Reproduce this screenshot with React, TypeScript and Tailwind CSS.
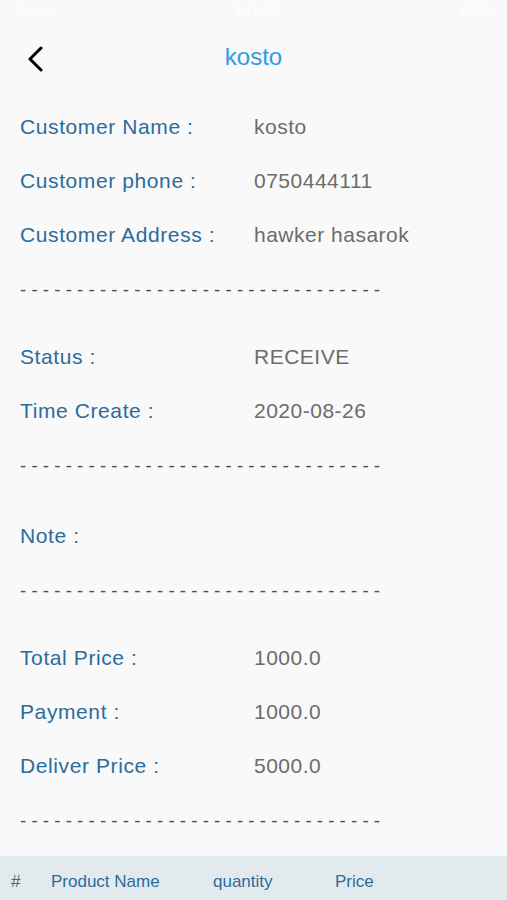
import { ReactNode } from 'react';

const font = { fontFamily: '"Liberation Sans", Arial, sans-serif' };

function Row({ label, value }: { label: string; value?: string }) {
  return (
    <div className="flex h-[54px] items-center pl-[20px]">
      <div className="w-[234px] text-[21px] tracking-[0.6px] text-[#2b6c9c]">
        {label}
      </div>
      <div className="text-[21px] tracking-[0.5px] text-[#6c6c6c]">{value}</div>
    </div>
  );
}

function Divider({ className }: { className: string }) {
  return (
    <div className={className}>
      <div className="pt-[18px] pl-[20px] text-[18.7px] leading-[20px] whitespace-pre text-[#4e4e4e]">
        {'- '.repeat(32)}
      </div>
    </div>
  );
}

function Section({ children }: { children: ReactNode }) {
  return <div className="flex flex-col">{children}</div>;
}

export default function App() {
  return (
    <div className="h-[900px] w-full overflow-hidden bg-[#f9f9f9]" style={font}>
      {/* status bar */}
      <div className="flex h-[24px] items-center justify-between px-[16px] text-[12px] text-white">
        <span>Carrier</span>
        <span>9:41 AM</span>
        <span>100%</span>
      </div>

      {/* nav */}
      <div className="relative flex h-[66px] items-center justify-center">
        <svg
          className="absolute left-[26px] top-[22px]"
          width="20"
          height="26"
          viewBox="0 0 20 26"
          fill="none"
        >
          <path
            d="M15 2 L4 13 L15 24"
            stroke="#000"
            strokeWidth="3"
            strokeLinecap="round"
            strokeLinejoin="round"
          />
        </svg>
        <div className="text-[24px] text-[#2f9be4]">kosto</div>
      </div>

      <div className="pt-[10px]">
        <Section>
          <Row label="Customer Name :" value="kosto" />
          <Row label="Customer phone :" value="0750444111" />
          <Row label="Customer Address :" value="hawker hasarok" />
        </Section>
        <Divider className="h-[68px]" />
        <Section>
          <Row label="Status :" value="RECEIVE" />
          <Row label="Time Create :" value="2020-08-26" />
        </Section>
        <Divider className="h-[71px]" />
        <Section>
          <Row label="Note :" />
        </Section>
        <Divider className="h-[68px]" />
        <Section>
          <Row label="Total Price :" value="1000.0" />
          <Row label="Payment :" value="1000.0" />
          <Row label="Deliver Price :" value="5000.0" />
        </Section>
        <Divider className="h-[63px]" />

        {/* table header */}
        <div className="flex h-[52px] items-center bg-[#e3eaee] text-[17px] text-[#2b6c9c]">
          <div className="w-[51px] pl-[11px]">#</div>
          <div className="w-[162px]">Product Name</div>
          <div className="w-[122px]">quantity</div>
          <div>Price</div>
        </div>
      </div>
    </div>
  );
}
